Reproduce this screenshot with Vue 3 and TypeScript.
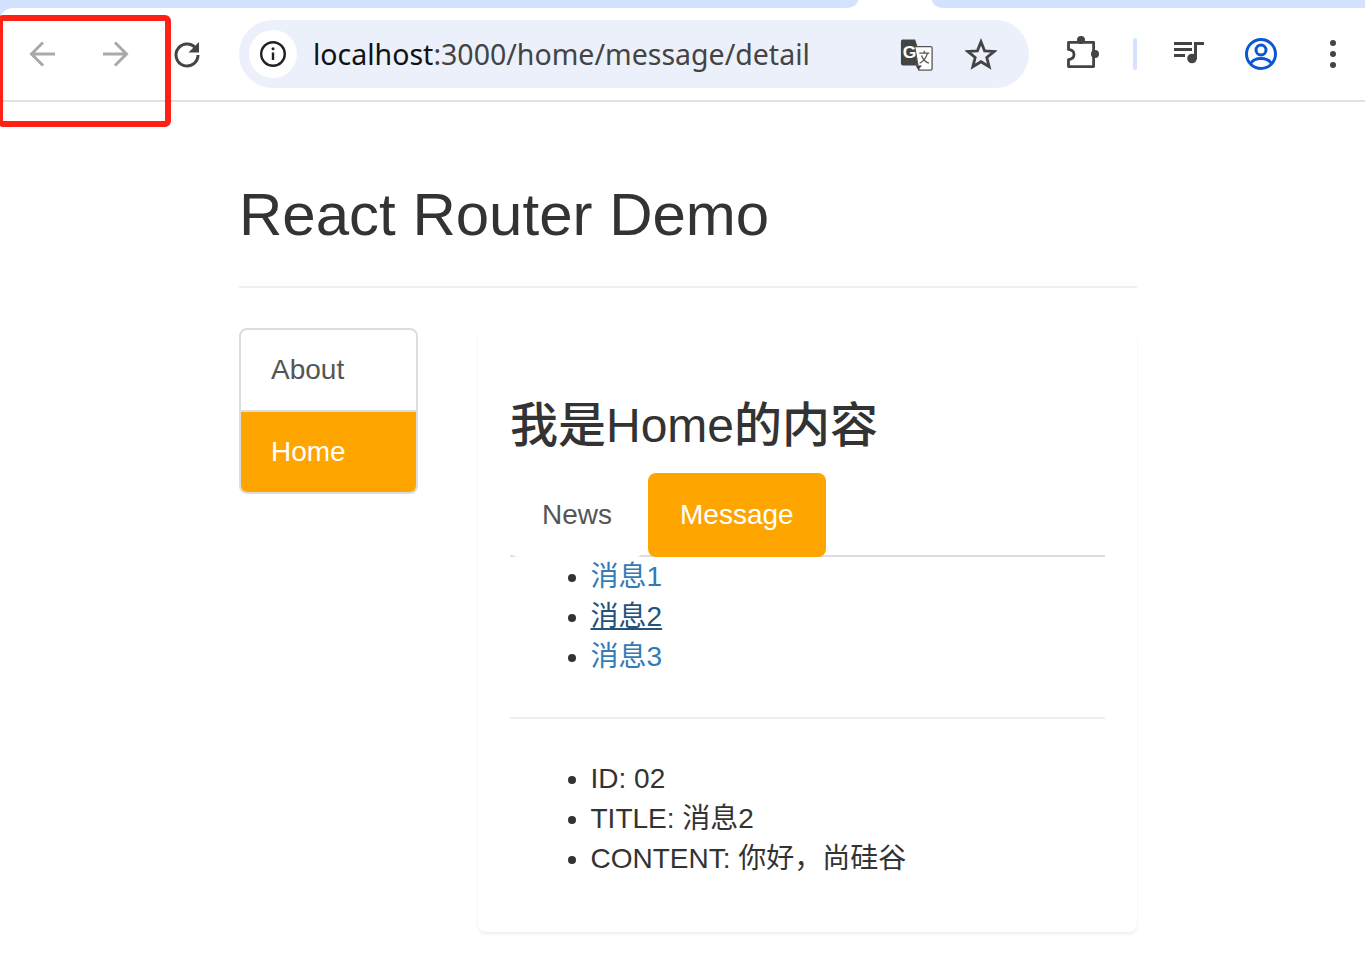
<script setup lang="ts">
const messages = [
  { id: '01', title: '消息1' },
  { id: '02', title: '消息2', hover: true },
  { id: '03', title: '消息3' },
];

const detail = ['ID: 02', 'TITLE: 消息2', 'CONTENT: 你好，尚硅谷'];
</script>

<template>
  <div class="browser">
    <div class="tab-strip">
      <div class="strip-left"></div>
      <div class="strip-right"></div>
    </div>

    <header class="toolbar">
      <div class="corner"></div>
      <button class="tool" aria-label="Back">
        <svg width="32" height="32" viewBox="0 0 32 32" fill="none" stroke="#a9a9a9" stroke-width="3">
          <path d="M28 16H6M16 4.500 4.500 16 16 27.500" />
        </svg>
      </button>
      <button class="tool" aria-label="Forward">
        <svg width="32" height="32" viewBox="0 0 32 32" fill="none" stroke="#a9a9a9" stroke-width="3">
          <path d="M4 16h22M16 4.500 27.500 16 16 27.500" />
        </svg>
      </button>
      <button class="tool" aria-label="Reload">
        <svg width="32" height="32" viewBox="0 0 32 32" fill="none">
          <path d="M25.500 11.500A11 11 0 1 0 27 17" stroke="#444" stroke-width="3" />
          <path d="M28 4V14.500H17.500Z" fill="#444" />
        </svg>
      </button>

      <div class="omnibox">
        <span class="site-info">
          <svg width="28" height="28" viewBox="0 0 28 28" fill="none">
            <circle cx="14" cy="14" r="11.800" stroke="#222" stroke-width="2.400" />
            <path d="M14 12.500v7.500" stroke="#222" stroke-width="2.400" />
            <circle cx="14" cy="8.800" r="1.500" fill="#222" />
          </svg>
        </span>
        <span class="url"><span class="host">localhost</span>:3000/home/message/detail</span>
        <svg class="translate" width="33" height="33" viewBox="0 0 36 36">
          <path d="M3 1.500h13.500L26 30H3.500A2.500 2.500 0 0 1 1 27.500V3.500A2 2 0 0 1 3 1.500Z" fill="#444" />
          <path d="M16 9.500h17.500a1.500 1.500 0 0 1 1.500 1.500v22.500a1.500 1.500 0 0 1-1.500 1.500H20.500Z" fill="#fff" stroke="#555" stroke-width="1.400" />
          <path d="M20 35l4-5h-7Z" fill="#444" />
          <text x="3" y="22" class="translate-g">G</text>
          <path d="M21 16.500h11M26.500 14v2.500M30 16.500c-1.500 5-4.500 9-8.500 11M23.500 19c1.500 4 4 7 8 8.500" fill="none" stroke="#555" stroke-width="1.400" />
        </svg>
        <svg class="star" width="32" height="32" viewBox="0 0 32 32" fill="none">
          <path d="M16 3.800 19.600 12.800 29.200 13.400 21.800 19.500 24.200 28.800 16 23.700 7.800 28.800 10.200 19.500 2.800 13.400 12.400 12.800Z" stroke="#444" stroke-width="2.800" stroke-linejoin="miter" />
        </svg>
      </div>

      <button class="tool ext" aria-label="Extensions">
        <svg width="36" height="36" viewBox="0 0 36 36" fill="none">
          <path d="M3.500 6.400h25.100v24.200H3.500v-7c4-.5 5.500-3 5.500-5.100s-1.500-4.600-5.500-5.100Z" stroke="#444" stroke-width="2.800" stroke-linejoin="round" />
          <circle cx="16" cy="4" r="4" fill="#444" />
          <circle cx="30" cy="18" r="4" fill="#444" />
        </svg>
      </button>
      <span class="divider"></span>
      <button class="tool" aria-label="Media">
        <svg width="32" height="32" viewBox="0 0 32 32" fill="#444">
          <rect x="1" y="4" width="18" height="3" />
          <rect x="1" y="10" width="18" height="3" />
          <rect x="1" y="16" width="11" height="3" />
          <rect x="21" y="4" width="3" height="17" />
          <rect x="21" y="4" width="10" height="3" />
          <circle cx="19" cy="20.500" r="4.800" />
        </svg>
      </button>
      <button class="tool" aria-label="Profile">
        <svg width="34" height="34" viewBox="0 0 34 34" fill="none" stroke="#0b57d0" stroke-width="3">
          <circle cx="17" cy="17" r="14.500" />
          <circle cx="17" cy="13" r="5" />
          <path d="M6.500 26.500C9 22.500 13 21.500 17 21.500s8 1 10.500 5" />
        </svg>
      </button>
      <button class="tool" aria-label="Menu">
        <svg width="32" height="32" viewBox="0 0 32 32" fill="#444">
          <circle cx="16" cy="5" r="3" />
          <circle cx="16" cy="16" r="3" />
          <circle cx="16" cy="27" r="3" />
        </svg>
      </button>
    </header>

    <main class="container">
      <div class="page-header">
        <h2>React Router Demo</h2>
      </div>

      <div class="columns">
        <nav class="side-nav">
          <a class="side-link">About</a>
          <a class="side-link active">Home</a>
        </nav>

        <section class="panel">
          <h3>我是Home的内容</h3>

          <ul class="tabs">
            <li class="tab">News</li>
            <li class="tab active">Message</li>
          </ul>

          <ul class="list messages">
            <li v-for="item in messages" :key="item.id">
              <a :class="{ hover: item.hover }">{{ item.title }}</a>
            </li>
          </ul>

          <hr class="rule" />

          <ul class="list detail">
            <li v-for="line in detail" :key="line">{{ line }}</li>
          </ul>
        </section>
      </div>
    </main>

    <div class="highlight"></div>
  </div>
</template>

<style scoped>
.browser {
  position: relative;
  width: 1365px;
  height: 959px;
  overflow: hidden;
  background: #fff;
  color: #333;
  font-family: "Liberation Sans", "Noto Sans CJK SC", sans-serif;
}

.tab-strip {
  display: flex;
  justify-content: space-between;
  height: 8px;
}

.strip-left {
  width: 858px;
  background: #d3e3fd;
  border-bottom-right-radius: 12px 8px;
}

.strip-right {
  width: 433px;
  background: #d3e3fd;
  border-bottom-left-radius: 12px 8px;
}

.toolbar {
  position: relative;
  display: flex;
  align-items: center;
  height: 94px;
  box-sizing: border-box;
  padding-left: 7px;
  border-bottom: 2px solid #e1e1e1;
}

.corner {
  position: absolute;
  top: 0;
  left: 0;
  width: 12px;
  height: 12px;
  background: radial-gradient(circle at 100% 100%, transparent 11.500px, #d3e3fd 12px);
}

.tool {
  display: flex;
  flex: none;
  align-items: center;
  justify-content: center;
  width: 72px;
  height: 68px;
  padding: 0;
  border: 0;
  background: none;
}

.omnibox {
  display: flex;
  flex: none;
  align-items: center;
  width: 790px;
  height: 68px;
  margin: 0 18px 0 16px;
  padding: 0 32px 0 10px;
  box-sizing: border-box;
  border-radius: 34px;
  background: #ebf0fa;
}

.site-info {
  display: flex;
  flex: none;
  align-items: center;
  justify-content: center;
  width: 48px;
  height: 48px;
  border-radius: 50%;
  background: #fff;
}

.url {
  flex: 1;
  margin-left: 16px;
  font-family: "Noto Sans", sans-serif;
  font-size: 28.5px;
  color: #444;
  white-space: nowrap;
}

.host {
  color: #111;
}

.translate {
  flex: none;
  margin-right: 32px;
}

.translate-g {
  font-family: "Liberation Sans", sans-serif;
  font-size: 19px;
  font-weight: 700;
  fill: #fff;
}

.star {
  flex: none;
}

.ext {
  margin-right: 14px;
}

.divider {
  flex: none;
  width: 4px;
  height: 32px;
  margin-right: 16px;
  border-radius: 2px;
  background: #d3e3fd;
}

.container {
  width: 898px;
  margin-left: 239px;
}

.page-header {
  height: 186px;
  box-sizing: border-box;
  padding-top: 80px;
  border-bottom: 2px solid #eee;
}

h2 {
  margin: 0;
  font-size: 60px;
  font-weight: 500;
  line-height: 66px;
}

.columns {
  display: flex;
  align-items: flex-start;
  margin-top: 40px;
}

.side-nav {
  display: flex;
  flex: none;
  flex-direction: column;
  width: 179px;
  box-sizing: border-box;
  border: 2px solid #ddd;
  border-radius: 8px;
  overflow: hidden;
}

.side-link {
  height: 80px;
  padding: 20px 30px;
  box-sizing: border-box;
  font-size: 28px;
  line-height: 40px;
  color: #555;
}

.side-link.active {
  height: 82px;
  border-top: 2px solid #ddd;
  background: #ffa500;
  color: #fff;
}

.panel {
  flex: none;
  width: 659px;
  height: 602px;
  margin: 2px 0 0 60px;
  padding: 0 32px;
  box-sizing: border-box;
  border-radius: 8px;
  box-shadow: 0 2px 3px rgba(0, 0, 0, 0.07);
}

h3 {
  margin: 0;
  padding-top: 69px;
  font-size: 48px;
  font-weight: 500;
  line-height: 53px;
}

.tabs {
  display: flex;
  gap: 4px;
  height: 84px;
  margin: 21px 0 0;
  padding: 0;
  box-sizing: border-box;
  border-bottom: 2px solid #ddd;
  list-style: none;
}

.tab {
  height: 84px;
  padding: 22px 32px;
  box-sizing: border-box;
  border-radius: 8px;
  background: #fff;
  font-size: 28px;
  line-height: 40px;
  color: #555;
}

.tab.active {
  background: #ffa500;
  color: #fff;
}

.list {
  margin: 0;
  padding: 0 0 0 80.5px;
  font-size: 28px;
  line-height: 40px;
}

.list a {
  color: #337ab7;
}

.list a.hover {
  color: #23527c;
  text-decoration: underline;
}

.rule {
  height: 2px;
  margin: 40px 0;
  border: 0;
  background: #eee;
}

.highlight {
  position: absolute;
  top: 15px;
  left: -3px;
  width: 174px;
  height: 112px;
  box-sizing: border-box;
  border: 6px solid #ff2016;
  border-radius: 6px;
}
</style>

<style>
html,
body {
  margin: 0;
}
</style>
